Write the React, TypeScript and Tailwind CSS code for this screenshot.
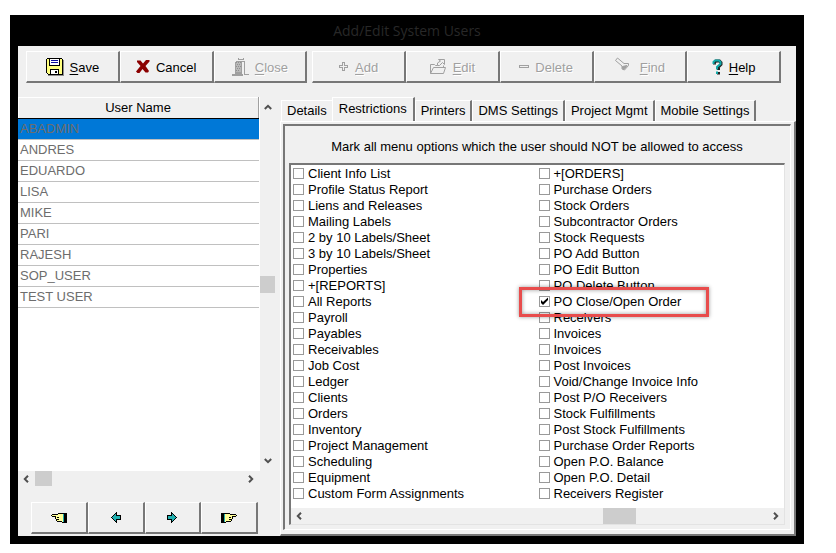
import type { ReactNode } from "react";

type IconProps = { className?: string };

const SaveIcon = () => (
  <svg width="18" height="18" viewBox="0 0 18 18" shapeRendering="crispEdges" aria-hidden="true">
    <path d="M2 2h16v16H2z" fill="#909090" />
    <path d="M1 0h15v1h1v16H2v-1H1v-1H0V1h1z" fill="#000" />
    <path d="M1 1h15v15H2v-1H1z" fill="#ffff80" />
    <path d="M3 1h11v7H3z" fill="#000" />
    <path d="M4 1h9v6H4z" fill="#fff" />
    <path d="M5 2h7v1H5zM5 4h7v1H5z" fill="#1010a0" />
    <path d="M4 11h9v5H4z" fill="#000" />
    <path d="M5 12h7v4H5z" fill="#fff" />
    <path d="M9 13h2v2H9z" fill="#000" />
  </svg>
);

const CancelIcon = () => (
  <svg width="14" height="15" viewBox="0 0 14 15" aria-hidden="true">
    <path
      d="M1 1.500h3.500l2.500 3 3-3.500h3.500v1.500L9.500 7l3.500 5-1 1.500H9.500L6.500 10 3.500 14H1.500L0 12.500 4.500 7 1 3z"
      fill="#8b0000"
    />
  </svg>
);

const CloseIcon = () => (
  <svg width="17" height="18" viewBox="0 0 17 18" shapeRendering="crispEdges" aria-hidden="true">
    <path d="M6 0h1v1h4V0h1v2H6zM4 3h9v1H4z" fill="#a0a0a0" />
    <path d="M4 4h5v10H4z" fill="#b8b8b8" />
    <path
      d="M4 4h1v1H4zM6 4h1v1H6zM8 4h1v1H8zM5 6h1v1H5zM7 6h1v1H7zM4 8h1v1H4zM6 8h1v1H6zM8 8h1v1H8zM5 10h1v1H5zM7 10h1v1H7zM4 12h1v1H4zM6 12h1v1H6z"
      fill="#909090"
    />
    <path d="M3 4h1v11H3zM9 4h1v11H9zM12 4h1v12h4v1h-5zM3 14h7v2h1v2H0v-2h3z" fill="#a0a0a0" />
  </svg>
);

const AddIcon = () => (
  <svg width="10" height="10" viewBox="0 0 10 10" shapeRendering="crispEdges" aria-hidden="true">
    <path d="M3.500.5h2v3h3v2h-3v3h-2v-3h-3v-2h3z" fill="none" stroke="#a0a0a0" />
  </svg>
);

const EditIcon = () => (
  <svg width="17" height="16" viewBox="0 0 17 16" fill="none" stroke="#a0a0a0" aria-hidden="true">
    <path d="M.5 14.500v-9h4l1 1h2M.5 14.500l3-6h12l-2 6zM13.500 8V6.500" />
    <path d="M7.500 6.500V4l3-2-2-1.500h6v5l-2-2-3 3z" />
  </svg>
);

const DeleteIcon = () => (
  <svg width="10" height="4" viewBox="0 0 10 4" shapeRendering="crispEdges" aria-hidden="true">
    <path d="M.5.5h9v2h-9z" fill="none" stroke="#a0a0a0" />
  </svg>
);

const FindIcon = () => (
  <svg width="15" height="16" viewBox="0 0 15 16" fill="none" stroke="#a0a0a0" className="mr-1 mb-1" aria-hidden="true">
    <path d="M.5 3.500l2-2.500L9 6.500h4.500v2l-4 4.500-2.500-1V9z" />
    <path d="M7.500 9.500l4.500-1-3 4-1.500-1z" fill="#a0a0a0" />
  </svg>
);

const HelpIcon = () => (
  <svg width="11" height="16" viewBox="0 0 11 16" fill="none" aria-hidden="true">
    <path d="M2.500 5.500V3.500L4 2h3.500L9 3.500v2L6.500 8v3M6.500 13v2.500" stroke="#202020" strokeWidth="3" />
    <path d="M1.500 5V3L3 1.500h4L8.500 3v2L5 8v2.500M5 12.500v2.500" stroke="#10a8a8" strokeWidth="2" />
  </svg>
);

const HandIcon = ({ className }: IconProps) => (
  <svg width="16" height="10" viewBox="0 0 16 10" shapeRendering="crispEdges" className={className} aria-hidden="true">
    <path d="M1 2h6V1h4v7H6V6H5V4H1z" fill="#ffff99" />
    <path
      d="M1 1h6v1H1zM0 2h1v1H0zM1 3h4v1H1zM7 0h4v1H7zM4 4h1v2H4zM6 4h2v1H6zM5 6h3v1H5zM5 7h1v1H5zM6 8h5v1H6z"
      fill="#000"
    />
    <path d="M11 0h5v10h-5z" fill="#000" />
    <path d="M11 1h1v8h-1z" fill="#ffff99" />
    <path d="M12 1h1v8h-1z" fill="#20b0b0" />
  </svg>
);

const ArrowIcon = ({ className }: IconProps) => (
  <svg width="10" height="11" viewBox="0 0 10 11" shapeRendering="crispEdges" className={className} aria-hidden="true">
    <path d="M5 0h1v3h4v5H6v3H5v-1H4V9H3V8H2V7H1V6H0V5h1V4h1V3h1V2h1V1h1z" fill="#000" />
    <path d="M4 2h1v2h4v3H5v2H4V8H3V7H2V6H1V5h1V4h1V3h1z" fill="#20b0b0" />
  </svg>
);

const Chevron = ({ className }: IconProps) => (
  <svg width="8" height="8" viewBox="0 0 8 8" className={className} aria-hidden="true">
    <path d="M.8 6l3.200-3.200L7.200 6" fill="none" stroke="#505050" strokeWidth="2" />
  </svg>
);

type ToolButtonProps = {
  icon: ReactNode;
  label: string;
  plain?: boolean;
  disabled?: boolean;
};

const raised =
  "border-t border-l border-t-white border-l-white border-r-2 border-b-2 border-r-[#777777] border-b-[#777777] bg-[#f0f0f0]";

const ToolButton = ({ icon, label, plain, disabled }: ToolButtonProps) => (
  <button
    type="button"
    disabled={disabled}
    className={`flex h-8 flex-1 items-center justify-center gap-1.5 ${raised} disabled:text-[#a0a0a0] disabled:[text-shadow:1px_1px_0_#ffffff]`}
  >
    {icon}
    <span className="pt-0.5">
      {plain ? label[0] : <u className="underline-offset-2">{label[0]}</u>}
      {label.slice(1)}
    </span>
  </button>
);

const users = ["ABADMIN", "ANDRES", "EDUARDO", "LISA", "MIKE", "PARI", "RAJESH", "SOP_USER", "TEST USER"];

const tabs = ["Details", "Restrictions", "Printers", "DMS Settings", "Project Mgmt", "Mobile Settings"];

const leftOptions = [
  "Client Info List",
  "Profile Status Report",
  "Liens and Releases",
  "Mailing Labels",
  "2 by 10 Labels/Sheet",
  "3 by 10 Labels/Sheet",
  "Properties",
  "+[REPORTS]",
  "All Reports",
  "Payroll",
  "Payables",
  "Receivables",
  "Job Cost",
  "Ledger",
  "Clients",
  "Orders",
  "Inventory",
  "Project Management",
  "Scheduling",
  "Equipment",
  "Custom Form Assignments",
];

const rightOptions = [
  "+[ORDERS]",
  "Purchase Orders",
  "Stock Orders",
  "Subcontractor Orders",
  "Stock Requests",
  "PO Add Button",
  "PO Edit Button",
  "PO Delete Button",
  "PO Close/Open Order",
  "Receivers",
  "Invoices",
  "Invoices",
  "Post Invoices",
  "Void/Change Invoice Info",
  "Post P/O Receivers",
  "Stock Fulfillments",
  "Post Stock Fulfillments",
  "Purchase Order Reports",
  "Open P.O. Balance",
  "Open P.O. Detail",
  "Receivers Register",
];

const HIGHLIGHTED = "PO Close/Open Order";

const OptionList = ({ options }: { options: string[] }) => (
  <ul>
    {options.map((option, i) => (
      <li key={i} className="relative h-4">
        <label className="flex h-4 items-center gap-1 whitespace-nowrap">
          <span className="grid">
            <input
              type="checkbox"
              defaultChecked={option === HIGHLIGHTED}
              className="peer col-start-1 row-start-1 size-[11px] appearance-none border border-[#999999] bg-white"
            />
            <svg
              viewBox="0 0 11 11"
              className="pointer-events-none invisible col-start-1 row-start-1 size-[11px] peer-checked:visible"
              aria-hidden="true"
            >
              <path d="M2 4v3l2 2 5-5V1.500L4 6z" fill="#000" />
            </svg>
          </span>
          <span className="pt-0.5">{option}</span>
        </label>
        {option === HIGHLIGHTED && (
          <span className="pointer-events-none absolute -top-1.5 -left-5 z-10 h-[30px] w-[190px] border-3 border-[#e84c4c] shadow-[0_0_4px_rgba(0,0,0,0.4),inset_0_0_4px_rgba(0,0,0,0.4)]" />
        )}
      </li>
    ))}
  </ul>
);

const UserList = () => (
  <section className="flex w-[257px] shrink-0 flex-col">
    <div className="flex flex-1">
      <div className="flex-1 bg-white pr-px">
        <table className="w-full border-collapse text-left">
          <thead>
            <tr>
              <th className="h-[21px] border-r border-b border-r-[#a0a0a0] border-b-black bg-[#f0f0f0] p-0 pt-0.5 text-center font-normal shadow-[inset_1px_1px_0_#ffffff]">
                User Name
              </th>
            </tr>
          </thead>
          <tbody className="text-[#6d6d6d]">
            {users.map((user, i) => (
              <tr key={user} className={i === 0 ? "bg-[#0078d7]" : ""}>
                <td className="h-[21px] border-b border-[#c0c0c0] px-0.5 py-0">{user}</td>
              </tr>
            ))}
          </tbody>
        </table>
      </div>
      <div className="flex w-[15px] flex-col items-center justify-between py-1.5">
        <button type="button" aria-label="Scroll up">
          <Chevron />
        </button>
        <span className="h-[17px] w-[15px] bg-[#cdcdcd]" />
        <button type="button" aria-label="Scroll down">
          <Chevron className="rotate-180" />
        </button>
      </div>
    </div>
    <div className="mr-4 flex h-[15px] items-center px-1">
      <button type="button" aria-label="Scroll left">
        <Chevron className="-rotate-90" />
      </button>
      <span className="ml-[5px] h-[15px] w-[17px] bg-[#cdcdcd]" />
      <button type="button" aria-label="Scroll right" className="ml-auto">
        <Chevron className="rotate-90" />
      </button>
    </div>
    <div className="mt-4 mb-0.5 ml-[13px] flex w-[227px]">
      {[
        { label: "First user", icon: <HandIcon /> },
        { label: "Previous user", icon: <ArrowIcon /> },
        { label: "Next user", icon: <ArrowIcon className="rotate-180" /> },
        { label: "Last user", icon: <HandIcon className="-scale-x-100" /> },
      ].map(({ label, icon }) => (
        <button key={label} type="button" aria-label={label} className={`flex h-8 flex-1 items-center justify-center ${raised}`}>
          {icon}
        </button>
      ))}
    </div>
  </section>
);

const App = () => {
  return (
    <main className="pt-[15px] pr-8 pb-2 pl-2.5 font-['Liberation_Sans',Arial,sans-serif] text-[13px] leading-4 text-black">
      <div className="bg-black px-2 pb-2">
        <h1 className="h-[31px] text-center font-['Open_Sans',sans-serif] text-sm leading-8 text-[#282828]">
          Add/Edit System Users
        </h1>
        <div className="bg-[#f0f0f0]">
          <div className="flex gap-[5px] pt-[5px] pr-[15px] pl-2">
            <div className="flex flex-3">
              <ToolButton icon={<SaveIcon />} label="Save" />
              <ToolButton icon={<CancelIcon />} label="Cancel" plain />
              <ToolButton icon={<CloseIcon />} label="Close" disabled />
            </div>
            <div className="flex flex-5">
              <ToolButton icon={<AddIcon />} label="Add" disabled />
              <ToolButton icon={<EditIcon />} label="Edit" disabled />
              <ToolButton icon={<DeleteIcon />} label="Delete" plain disabled />
              <ToolButton icon={<FindIcon />} label="Find" disabled />
              <ToolButton icon={<HelpIcon />} label="Help" />
            </div>
          </div>
          <div className="flex gap-[5px] pt-3.5">
            <UserList />
            <section className="flex min-w-0 flex-1 flex-col">
              <div role="tablist" className="flex h-6 items-end pl-px">
                {tabs.map((tab) => (
                  <button
                    key={tab}
                    type="button"
                    role="tab"
                    aria-selected={tab === "Restrictions"}
                    className="h-[21px] border-t border-l border-r-2 border-white border-r-[#777777] bg-[#f0f0f0] px-[5px] whitespace-nowrap aria-selected:z-10 aria-selected:-ml-0.5 aria-selected:h-6 aria-selected:px-1.5 aria-selected:pb-0.5"
                  >
                    {tab}
                  </button>
                ))}
              </div>
              <div className="flex-1 border-t border-l border-r-2 border-b-2 border-white border-r-[#777777] border-b-[#777777] p-0.5 pr-[3px] pb-1">
                <div className="border-t-2 border-l-2 border-r border-b border-white border-t-[#777777] border-l-[#777777] pr-[5px] pb-1 pl-1">
                  <p className="pt-[13px] pb-2 text-center">
                    Mark all menu options which the user should NOT be allowed to access
                  </p>
                  <div className="border-t-2 border-l-2 border-r border-b border-[#e3e3e3] border-t-[#777777] border-l-[#777777] bg-white">
                    <div className="grid grid-cols-2 pb-[7px] pl-0.5">
                      <OptionList options={leftOptions} />
                      <OptionList options={rightOptions} />
                    </div>
                    <div className="flex h-4 items-center bg-[#f0f0f0] px-1">
                      <button type="button" aria-label="Scroll options left">
                        <Chevron className="-rotate-90" />
                      </button>
                      <div className="flex flex-1">
                        <span className="ml-[64%] h-4 w-[33px] bg-[#cdcdcd]" />
                      </div>
                      <button type="button" aria-label="Scroll options right">
                        <Chevron className="rotate-90" />
                      </button>
                    </div>
                  </div>
                </div>
              </div>
            </section>
          </div>
        </div>
      </div>
    </main>
  );
};

export default App;
